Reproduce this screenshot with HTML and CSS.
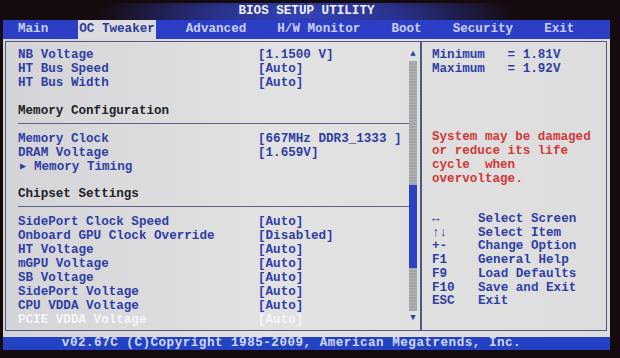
FILE: index.html
```html
<!DOCTYPE html>
<html lang="en">
<head>
    <meta charset="UTF-8">
    <title>BIOS Setup Utility</title>
    <link rel="stylesheet" href="styles.css">
</head>
<body>

    <div class="screen">
        <div class="title">BIOS SETUP UTILITY</div>

        <!-- Top menu -->
        <nav class="tabs">
            <span class="tab">Main</span>
            <span class="tab active">OC Tweaker</span>
            <span class="tab">Advanced</span>
            <span class="tab">H/W Monitor</span>
            <span class="tab">Boot</span>
            <span class="tab">Security</span>
            <span class="tab">Exit</span>
        </nav>

        <div class="body">
            <div class="panel">
                <!-- Settings list -->
                <div class="left">
                    <div class="list">
                        <div class="row"><span class="label">NB Voltage</span><span>[1.1500 V]</span></div>
                        <div class="row"><span class="label">HT Bus Speed</span><span>[Auto]</span></div>
                        <div class="row"><span class="label">HT Bus Width</span><span>[Auto]</span></div>
                        <div class="row"></div>
                        <div class="row heading">Memory Configuration</div>
                        <div class="row sep"></div>
                        <div class="row"><span class="label">Memory Clock</span><span>[667MHz DDR3_1333 ]</span></div>
                        <div class="row"><span class="label">DRAM Voltage</span><span>[1.659V]</span></div>
                        <div class="row"><span class="sub">&#9654;</span>Memory Timing</div>
                        <div class="row"></div>
                        <div class="row heading">Chipset Settings</div>
                        <div class="row sep"></div>
                        <div class="row"><span class="label">SidePort Clock Speed</span><span>[Auto]</span></div>
                        <div class="row"><span class="label">Onboard GPU Clock Override</span><span>[Disabled]</span></div>
                        <div class="row"><span class="label">HT Voltage</span><span>[Auto]</span></div>
                        <div class="row"><span class="label">mGPU Voltage</span><span>[Auto]</span></div>
                        <div class="row"><span class="label">SB Voltage</span><span>[Auto]</span></div>
                        <div class="row"><span class="label">SidePort Voltage</span><span>[Auto]</span></div>
                        <div class="row"><span class="label">CPU VDDA Voltage</span><span>[Auto]</span></div>
                        <div class="row selected"><span class="label">PCIE VDDA Voltage</span><span>[Auto]</span></div>
                    </div>
                    <div class="scrollbar">
                        <span class="arrow">&#9650;</span>
                        <div class="track"><div class="thumb"></div></div>
                        <span class="arrow">&#9660;</span>
                    </div>
                </div>

                <!-- Help column -->
                <div class="right">
                    <div class="range">Minimum   = 1.81V
Maximum   = 1.92V</div>
                    <div class="warning">System may be damaged
or reduce its life
cycle  when
overvoltage.</div>
                    <div class="keys">
                        <span>&#8596;</span><span>Select Screen</span>
                        <span>&#8593;&#8595;</span><span>Select Item</span>
                        <span>+-</span><span>Change Option</span>
                        <span>F1</span><span>General Help</span>
                        <span>F9</span><span>Load Defaults</span>
                        <span>F10</span><span>Save and Exit</span>
                        <span>ESC</span><span>Exit</span>
                    </div>
                </div>
            </div>
        </div>

        <div class="footer">v02.67C (C)Copyright 1985-2009, American Megatrends, Inc.</div>
    </div>

</body>
</html>
```

FILE: styles.css
```css
body {
    margin: 0;
    width: 620px;
    height: 358px;
    background-color: #150a0e;
    font-family: "Liberation Mono", "DejaVu Sans Mono", monospace;
    font-size: 12.6px;
    font-weight: bold;
    overflow: hidden;
}

.screen {
    margin-left: 3px;
    width: 607px;
}

/* Title strip */
.title {
    height: 17px;
    margin-top: 3px;
    line-height: 16px;
    text-align: center;
    color: #eef0ff;
    background: radial-gradient(ellipse 210px 36px at 50% 70%, #3644b8 0%, #28328a 45%, rgba(21, 10, 14, 0) 100%);
}

/* Menu tabs */
.tabs {
    display: flex;
    gap: 29px;
    height: 19px;
    padding-left: 14px;
    line-height: 18px;
    background-color: #2c3ec6;
    color: #c9d0ff;
}

.tab {
    padding: 0 1px;
}

.tab.active {
    background-color: #dcdce0;
    color: #2a3a9c;
}

/* Main area */
.body {
    padding: 2px 3px 6px 2px;
    background: linear-gradient(90deg, #d4d4d8 0%, #e2e2e2 45%, #dddddd 100%);
}

.panel {
    display: flex;
    height: 288px;
    border: 1px solid #515a7e;
}

.left {
    display: flex;
    width: 414px;
    border-right: 2px solid #515a7e;
}

.list {
    flex: 1;
    padding: 6px 0 0 12px;
    color: #2f3ea6;
}

.row {
    display: flex;
    height: 13.95px;
    line-height: 14px;
    white-space: pre;
}

.label {
    width: 240px;
}

.heading {
    color: #222226;
}

.sep::after {
    content: "";
    width: 100%;
    height: 1px;
    margin-top: 5px;
    background-color: #5a6286;
}

.sub {
    width: 14px;
    padding-left: 2px;
    font-size: 10px;
}

.selected {
    color: #f6f6f8;
}

/* Scrollbar */
.scrollbar {
    display: flex;
    flex-direction: column;
    width: 8px;
    margin-right: 3px;
    padding-top: 5px;
    color: #2f3ea6;
}

.arrow {
    height: 14px;
    line-height: 14px;
    font-size: 9px;
    text-align: center;
}

.track {
    height: 250px;
    background: repeating-linear-gradient(0deg, #a4a4a6 0, #a4a4a6 2px, #b4b4b6 2px, #b4b4b6 3px);
}

.thumb {
    height: 83px;
    margin-top: 124px;
    background-color: #2c42c4;
}

/* Help column */
.right {
    flex: 1;
    padding: 6px 0 0 10px;
}

.range {
    line-height: 14px;
    white-space: pre;
    color: #2f3ea6;
}

.warning {
    margin-top: 54px;
    line-height: 14px;
    white-space: pre;
    color: #d23838;
}

.keys {
    display: grid;
    grid-template-columns: 46px auto;
    margin-top: 27px;
    line-height: 13.7px;
    color: #2f3ea6;
}

/* Bottom bar */
.footer {
    height: 13px;
    padding-right: 30px;
    line-height: 12px;
    text-align: center;
    letter-spacing: 0.5px;
    background-color: #2342c4;
    color: #d2d8ff;
}
```
